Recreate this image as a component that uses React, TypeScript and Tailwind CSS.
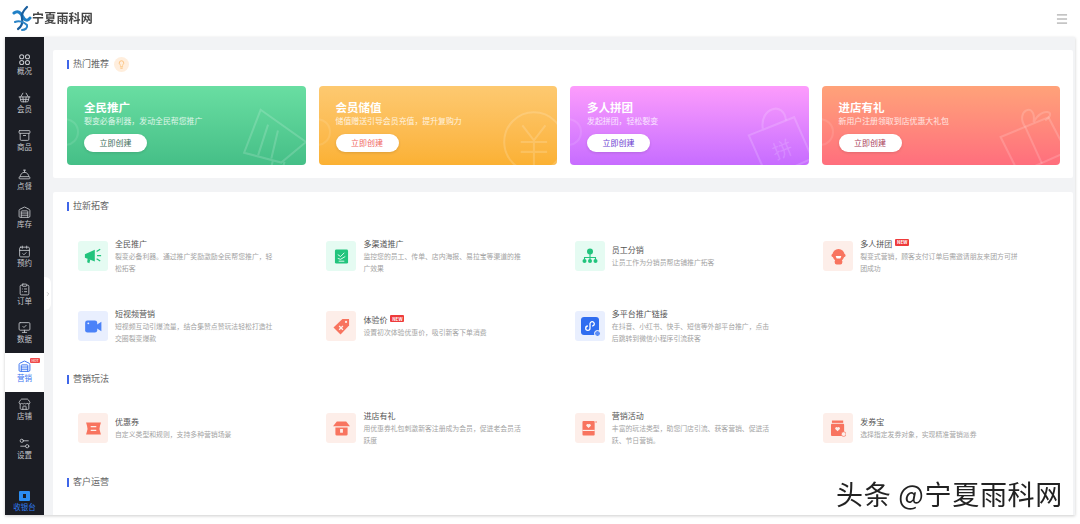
import type { ReactNode } from "react";
import {
  Archive,
  CalendarCheck,
  ChevronRight,
  ClipboardList,
  ConciergeBell,
  Lightbulb,
  Menu,
  MonitorCheck,
  Settings2,
  ShoppingBasket,
  Store,
  Warehouse,
} from "lucide-react";

const GREEN = "bg-[#e5fbf2] text-[#22c47d]";
const BLUE = "bg-[#e9effe] text-[#4b82f8]";
const RED = "bg-[#fdeee9] text-[#f8745f]";

function FourDots() {
  return (
    <svg viewBox="0 0 14 14" className="w-[13px] h-[13px]" fill="none" stroke="currentColor" strokeWidth="1.1">
      <circle cx="4" cy="4" r="2.2" />
      <circle cx="10.2" cy="4" r="2.2" />
      <circle cx="4" cy="10.2" r="2.2" />
      <circle cx="10.2" cy="10.2" r="2.2" />
    </svg>
  );
}

const navIconClass = "w-[13px] h-[13px]";

const navItems: { label: string; icon: ReactNode; active?: boolean }[] = [
  { label: "概况", icon: <FourDots /> },
  { label: "会员", icon: <ShoppingBasket className={navIconClass} strokeWidth={1.6} /> },
  { label: "商品", icon: <Archive className={navIconClass} strokeWidth={1.6} /> },
  { label: "点餐", icon: <ConciergeBell className={navIconClass} strokeWidth={1.6} /> },
  { label: "库存", icon: <Warehouse className={navIconClass} strokeWidth={1.6} /> },
  { label: "预约", icon: <CalendarCheck className={navIconClass} strokeWidth={1.6} /> },
  { label: "订单", icon: <ClipboardList className={navIconClass} strokeWidth={1.6} /> },
  { label: "数据", icon: <MonitorCheck className={navIconClass} strokeWidth={1.6} /> },
  { label: "营销", icon: <Warehouse className={navIconClass} strokeWidth={1.8} />, active: true },
  { label: "店铺", icon: <Store className={navIconClass} strokeWidth={1.6} /> },
  { label: "设置", icon: <Settings2 className={navIconClass} strokeWidth={1.6} /> },
];

function Logo() {
  return (
    <svg viewBox="0 0 20 28" className="w-[20px] h-[28px]" fill="none" strokeLinecap="round">
      <path d="M2 8 C6 5 9 8 11 12 C13 16 16 16 18 13" stroke="#2080c6" strokeWidth="3" />
      <path d="M15 2 C11 6 9 9 10 13 C11 18 9 22 6 24" stroke="#1a5f9e" strokeWidth="2.2" />
      <path d="M3 17 C7 15 12 17 15 20 C16 23 13 25 10 25" stroke="#2b84c6" strokeWidth="2" />
    </svg>
  );
}

function SectionTitle({ title, children }: { title: string; children?: ReactNode }) {
  return (
    <div className="flex items-center h-[14px]">
      <span className="w-[2px] h-[9px] bg-[#3f66e8] mr-[4px]" />
      <span className="text-[9px] text-[#666]">{title}</span>
      {children}
    </div>
  );
}

function Hot({ text }: { text: string }) {
  return (
    <span className="ml-[3px] -translate-y-[1px] inline-flex items-center justify-center w-[14px] h-[7px] rounded-[1px] bg-[#ee3b3b] text-white text-[4.5px] leading-none font-bold">
      {text}
    </span>
  );
}

const Megaphone = (
  <svg viewBox="0 0 20 20" className="w-[18px] h-[18px]" fill="currentColor">
    <path d="M1 8 L12 3 V16 L1 12 Z" />
    <path d="M4 13 L7 14 L6 18 L3.5 17 Z" />
    <path d="M14 5 L18 2.5 M14.5 9.5 H19 M14 13 L18 15.5" stroke="currentColor" strokeWidth="1.5" />
  </svg>
);
const Report = (
  <svg viewBox="0 0 16 16" className="w-[15px] h-[15px]">
    <rect x="1" y="0.5" width="14" height="15" rx="1.5" fill="currentColor" />
    <path d="M4 6 L7 8 L11 4 M4 10 L7 11 L12 8 M5 13 H11" stroke="#e5fbf2" strokeWidth="1" fill="none" />
  </svg>
);
const Org = (
  <svg viewBox="0 0 16 16" className="w-[16px] h-[16px]" fill="currentColor">
    <circle cx="8" cy="3.5" r="3" />
    <circle cx="2.5" cy="13" r="2" />
    <circle cx="8" cy="13" r="2" />
    <circle cx="13.5" cy="13" r="2" />
    <path d="M8 6 V13 M2.5 13 V9.5 H13.5 V13" stroke="currentColor" strokeWidth="1.1" fill="none" />
  </svg>
);
const Mascot = (
  <svg viewBox="0 0 16 18" className="w-[15px] h-[17px]" fill="currentColor">
    <circle cx="8" cy="7.5" r="6.5" />
    <rect x="4" y="12" width="8" height="5.5" rx="2" />
    <rect x="0.5" y="6" width="15" height="3.5" rx="1.7" />
    <path d="M5 8.5 H11 L10 11 H6 Z" fill="#fff" />
  </svg>
);
const Video = (
  <svg viewBox="0 0 18 14" className="w-[17px] h-[13px]" fill="currentColor">
    <rect x="0" y="0.5" width="13" height="13" rx="2.5" />
    <path d="M12 5.5 L17.5 2 V12 L12 8.5 Z" />
    <circle cx="3.4" cy="3.6" r="1" fill="#e9effe" />
  </svg>
);
const Tag = (
  <svg viewBox="0 0 18 18" className="w-[17px] h-[17px]" fill="currentColor">
    <path d="M10 1 H17 V8 L8 17.5 L0.5 10 Z" />
    <circle cx="13.8" cy="4.2" r="1.2" fill="#fdeee9" />
    <path d="M6.5 8.5 L10.5 12.5 M10.5 8.5 L6.5 12.5" stroke="#fdeee9" strokeWidth="1.4" />
  </svg>
);
const MiniApp = (
  <div className="relative w-[18px] h-[18px] rounded-[3px] bg-[#2f6df0] flex items-center justify-center">
    <svg viewBox="0 0 14 14" className="w-[12px] h-[12px]" fill="none" stroke="#fff" strokeWidth="1.5">
      <path d="M7 4.5 V9.5 A2.5 2.5 0 1 1 4.5 7 M7 9.5 V4.5 A2.5 2.5 0 1 1 9.5 7" />
    </svg>
    <span className="absolute -right-[2px] -bottom-[2px] w-[7px] h-[7px] rounded-full bg-[#5c8df5] border border-white" />
  </div>
);
const Ticket = (
  <svg viewBox="0 0 18 14" className="w-[17px] h-[13px]" fill="currentColor">
    <path d="M1 0.5 H17 L16 4 Q15 7 16 10 L17 13.5 H1 L2 10 Q3 7 2 4 Z" />
    <path d="M6 5 H12 M6 9 H12" stroke="#fdeee9" strokeWidth="1.2" />
  </svg>
);
const Shop = (
  <svg viewBox="0 0 18 16" className="w-[17px] h-[15px]" fill="currentColor">
    <path d="M4 0.5 H14 L18 5.5 H0 Z" />
    <path d="M2.5 7 H15.5 V14 A1.5 1.5 0 0 1 14 15.5 H4 A1.5 1.5 0 0 1 2.5 14 Z" />
    <rect x="7.5" y="8.5" width="3" height="4" fill="#fdeee9" />
  </svg>
);
const Gift = (
  <svg viewBox="0 0 16 17" className="w-[15px] h-[16px]" fill="currentColor">
    <rect x="0.5" y="1" width="13" height="15.5" rx="1" />
    <rect x="0.5" y="10.5" width="13" height="1.2" fill="#fdeee9" />
    <path d="M7 8.5 L4.5 6 A1.5 1.5 0 0 1 7 4.6 A1.5 1.5 0 0 1 9.5 6 Z" fill="#fdeee9" />
    <circle cx="15" cy="2" r="0.8" />
  </svg>
);
const Coupon = (
  <svg viewBox="0 0 16 18" className="w-[15px] h-[17px]" fill="currentColor">
    <rect x="1" y="0.5" width="12" height="2.5" />
    <rect x="0" y="4" width="14" height="13" rx="1" />
    <path d="M7 12 L4.5 9.5 A1.5 1.5 0 0 1 7 8 A1.5 1.5 0 0 1 9.5 9.5 Z" fill="#fdeee9" />
    <circle cx="13.5" cy="15" r="2.5" fill="#fdeee9" stroke="currentColor" strokeWidth="0.7" />
  </svg>
);

type Feature = { title: string; desc: string; tone: string; icon: ReactNode; hot?: boolean };

const growth: Feature[] = [
  { title: "全民推广", desc: "裂变必备利器。通过推广奖励激励全民帮您推广，轻松拓客", tone: GREEN, icon: Megaphone },
  { title: "多渠道推广", desc: "监控您的员工、传单、店内海报、易拉宝等渠道的推广效果", tone: GREEN, icon: Report },
  { title: "员工分销", desc: "让员工作为分销员帮店铺推广拓客", tone: GREEN, icon: Org },
  { title: "多人拼团", desc: "裂变式营销，顾客支付订单后需邀请朋友来团方可拼团成功", tone: RED, icon: Mascot, hot: true },
  { title: "短视频营销", desc: "短视频互动引爆流量，结合集赞点赞玩法轻松打造社交圈裂变爆款", tone: BLUE, icon: Video },
  { title: "体验价", desc: "设置初次体验优惠价，吸引新客下单消费", tone: RED, icon: Tag, hot: true },
  { title: "多平台推广链接", desc: "在抖音、小红书、快手、短信等外部平台推广，点击后跳转到微信小程序引流获客", tone: BLUE, icon: MiniApp },
];

const marketing: Feature[] = [
  { title: "优惠券", desc: "自定义类型和规则，支持多种营销场景", tone: RED, icon: Ticket },
  { title: "进店有礼", desc: "用优惠券礼包刺激新客注册成为会员，促进老会员活跃度", tone: RED, icon: Shop },
  { title: "营销活动", desc: "丰富的玩法类型，助您门店引流、获客营销、促进活跃、节日营销。", tone: RED, icon: Gift },
  { title: "发券宝", desc: "选择指定发券对象，实现精准营销派券", tone: RED, icon: Coupon },
];

function FeatureItem({ item }: { item: Feature }) {
  return (
    <div className="h-[30px] flex items-center gap-[7px]">
      <div className={`w-[30px] h-[30px] rounded-[3px] shrink-0 flex items-center justify-center ${item.tone}`}>
        {item.icon}
      </div>
      <div className="w-[160px] shrink-0">
        <div className="flex items-center text-[8px] leading-[12px] text-[#555]">
          {item.title}
          {item.hot && <Hot text="NEW" />}
        </div>
        <div className="text-[6.85px] leading-[12.5px] text-[#a3a3a3]">{item.desc}</div>
      </div>
    </div>
  );
}

const decoLabel = { fill: "rgba(255,255,255,0.16)", stroke: "none", fontSize: 24 };

const cards: { title: string; desc: string; bg: string; btn: string; deco: ReactNode }[] = [
  {
    title: "全民推广",
    desc: "裂变必备利器，发动全民帮您推广",
    bg: "bg-gradient-to-b from-[#69dea2] to-[#45bf87]",
    btn: "text-[#3e6d5a]",
    deco: <path d="M25 7 L5 59 L50 71 L80 46 Z M34 25 L22 62 M46 32 L38 66 M40 68 L36 84 M54 70 L50 84" />,
  },
  {
    title: "会员储值",
    desc: "储值赠送引导会员充值，提升复购力",
    bg: "bg-gradient-to-b from-[#fdc970] to-[#fbb133]",
    btn: "text-[#f0665f]",
    deco: (
      <>
        <circle cx="52" cy="46" r="36" />
        <path d="M38 26 L52 44 L66 26 M36 46 H68 M36 58 H68 M52 44 V80" />
      </>
    ),
  },
  {
    title: "多人拼团",
    desc: "发起拼团，轻松裂变",
    bg: "bg-gradient-to-b from-[#fd9cfc] to-[#c76cff]",
    btn: "text-[#6a3cd0]",
    deco: (
      <>
        <path d="M7 38 L62 16 L84 66 L30 90 Z" />
        <path d="M24 30 C20 4 50 -4 52 20" />
        <text x="36" y="64" transform="rotate(-22 48 56)" style={decoLabel}>
          拼
        </text>
      </>
    ),
  },
  {
    title: "进店有礼",
    desc: "新用户注册领取到店优惠大礼包",
    bg: "bg-gradient-to-b from-[#ffa279] to-[#ff6e7d]",
    btn: "text-[#a83c58]",
    deco: (
      <>
        <path d="M8 40 L66 16 L88 58 L30 84 Z" />
        <path d="M38 28 L58 72 M38 28 C24 8 52 -4 48 22 C58 2 78 10 62 20" />
      </>
    ),
  },
];

export default function App() {
  return (
    <div className="relative w-[1080px] h-[524px] overflow-hidden bg-white font-['Noto_Sans_CJK_SC','Liberation_Sans',sans-serif]">
      <div className="h-full px-[5px] flex flex-col blur-[0.5px]">
        <header className="h-[37px] shrink-0 flex items-center justify-between pl-[7px] pr-[6px]">
          <div className="flex items-center">
            <Logo />
            <span className="text-[12px] font-bold tracking-[0.2px] text-[#444] font-['Liberation_Serif','Noto_Sans_CJK_SC',serif]">
              宁夏雨科网
            </span>
          </div>
          <Menu className="w-[14px] h-[14px] text-[#8c8c8c]" strokeWidth={1.5} />
        </header>

        <div className="flex h-[478px] shadow-[0_1px_3px_rgba(0,0,0,0.2)]">
          <aside className="w-[39px] shrink-0 bg-[#1b1d24] pt-[9px] flex flex-col">
            {navItems.map((n) => (
              <div
                key={n.label}
                className={`relative h-[38.4px] pb-[2px] flex flex-col items-center justify-center ${
                  n.active ? "bg-white text-[#3b74f0]" : "text-[#c4c6cb]"
                }`}
              >
                {n.icon}
                <span className="text-[7.5px] leading-[10px]">{n.label}</span>
                {n.active && (
                  <span className="absolute top-[5px] right-[4px] w-[10px] h-[5px] rounded-[1px] bg-[#ef4a4a] text-white text-[3.5px] leading-[5px] text-center">
                    HOT
                  </span>
                )}
              </div>
            ))}
            <div className="mt-auto pb-[3px] flex flex-col items-center gap-[1px] text-[#2f7bf0]">
              <div className="w-[11px] h-[10px] rounded-[1px] bg-[#2b8cf0] flex items-center justify-center">
                <span className="w-[3px] h-[4px] bg-[#1b1d24]" />
              </div>
              <span className="text-[7.5px] leading-[10px]">收银台</span>
            </div>
          </aside>

          <main className="relative flex-1 bg-[#f2f3f5] pt-[13px] pl-[9px] pr-[2px] flex flex-col gap-[14px]">
            <div className="absolute left-0 top-[240px] w-[7px] h-[33px] bg-white rounded-r-[6px] flex items-center justify-center">
              <ChevronRight className="w-[6px] h-[6px] text-[#999]" strokeWidth={2} />
            </div>

            <section className="h-[128px] bg-white rounded-[2px] pt-[7px] pl-[14px] pr-[13px]">
              <SectionTitle title="热门推荐">
                <span className="ml-[5px] w-[15px] h-[15px] rounded-full bg-[#ffeedd] flex items-center justify-center">
                  <Lightbulb className="w-[9px] h-[9px] text-[#f9b868]" strokeWidth={2} />
                </span>
              </SectionTitle>
              <div className="mt-[15px] grid grid-cols-4 gap-[13px]">
                {cards.map((c) => (
                  <div key={c.title} className={`relative h-[79px] rounded-[4px] overflow-hidden pl-[17px] pt-[13px] ${c.bg}`}>
                    <svg
                      viewBox="0 0 80 80"
                      className="absolute right-0 top-[18px] w-[66px] h-[66px] overflow-visible"
                      fill="none"
                      stroke="rgba(255,255,255,0.16)"
                      strokeWidth="2.5"
                    >
                      {c.deco}
                    </svg>
                    <span className="absolute -left-[16px] top-[32px] w-[28px] h-[28px] rounded-full border-2 border-white/10" />
                    <div className="relative text-[11.5px] leading-[16px] font-bold text-white">{c.title}</div>
                    <div className="relative text-[7.9px] leading-[12px] text-white/80">{c.desc}</div>
                    <button className={`relative mt-[5px] w-[63px] h-[18px] rounded-full bg-white text-[8px] shadow-[0_1px_3px_rgba(0,0,0,0.12)] ${c.btn}`}>
                      立即创建
                    </button>
                  </div>
                ))}
              </div>
            </section>

            <section className="flex-1 bg-white rounded-t-[2px] pt-[7px] pl-[14px]">
              <SectionTitle title="拉新拓客" />
              <div className="mt-[28px] ml-[11px] grid grid-cols-[repeat(4,248.4px)] gap-y-[40px]">
                {growth.map((f) => (
                  <FeatureItem key={f.title} item={f} />
                ))}
              </div>
              <div className="mt-[31px]">
                <SectionTitle title="营销玩法" />
              </div>
              <div className="mt-[27px] ml-[11px] grid grid-cols-[repeat(4,248.4px)]">
                {marketing.map((f) => (
                  <FeatureItem key={f.title} item={f} />
                ))}
              </div>
              <div className="mt-[32px]">
                <SectionTitle title="客户运营" />
              </div>
            </section>
          </main>
        </div>
      </div>

      <div className="absolute right-[17px] top-[477px] text-[27px] leading-[34px] tracking-[0.7px] text-[#222] whitespace-nowrap [text-shadow:1px_1px_0_#fff,-1px_-1px_0_#fff,1px_-1px_0_#fff,-1px_1px_0_#fff]">
        头条 @宁夏雨科网
      </div>
    </div>
  );
}
